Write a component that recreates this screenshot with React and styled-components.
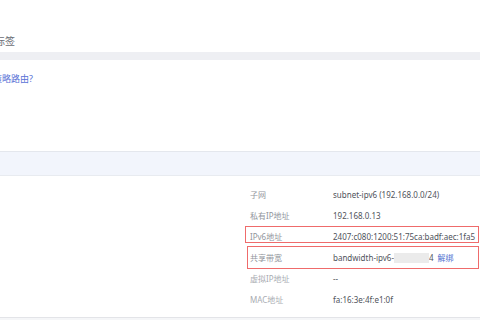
import React from "react";
import styled, { createGlobalStyle } from "styled-components";

const GlobalStyle = createGlobalStyle`
  html, body {
    margin: 0;
    padding: 0;
    background: #ffffff;
  }
  body {
    font-family: "Noto Sans", "Noto Sans CJK SC", sans-serif;
  }
`;

const Page = styled.div`
  width: 480px;
  height: 320px;
  overflow: hidden;
  display: flex;
  flex-direction: column;
  background: #fff;
`;

const SectionTitle = styled.div`
  margin-top: 35px;
  margin-left: -5px;
  height: 12px;
  line-height: 12px;
  font-size: 10px;
  color: #6b6e75;
  white-space: nowrap;
`;

const GrayBand = styled.div`
  margin-top: 5px;
  height: 8px;
  background: #eeeff3;
`;

const HelpLink = styled.a`
  display: block;
  margin-top: 13px;
  margin-left: -7px;
  height: 11px;
  line-height: 11px;
  font-size: 9px;
  color: #5872d6;
  text-decoration: none;
  white-space: nowrap;
`;

const HeaderBand = styled.div`
  margin-top: 67px;
  height: 25px;
  box-sizing: border-box;
  background: #f2f5fc;
  border-top: 1px solid #e4e7ed;
  border-bottom: 1px solid #e8ebf0;
`;

const Details = styled.div`
  position: relative;
  padding: 8px 0 0 250px;
  display: flex;
  flex-direction: column;
`;

const Row = styled.div`
  display: grid;
  grid-template-columns: 83px 1fr;
  height: 21px;
  align-items: center;
  font-size: 8px;
  white-space: nowrap;
`;

const Label = styled.span`
  color: ${(p) => (p.$muted ? "#a9acb2" : "#92959c")};
`;

const Value = styled.span`
  color: #4f535b;
  display: flex;
  align-items: center;
`;

const Masked = styled.span`
  display: inline-block;
  width: 35px;
  height: 10px;
  background: #ebebeb;
  filter: blur(0.6px);
`;

const Action = styled.a`
  margin-left: 4px;
  color: #4f6fd0;
  text-decoration: none;
`;

const Mark = styled.div`
  position: absolute;
  left: ${(p) => p.$left}px;
  top: ${(p) => p.$top}px;
  width: ${(p) => p.$width}px;
  height: ${(p) => p.$height}px;
  box-sizing: border-box;
  border: 1.5px solid #ef6b6b;
  pointer-events: none;
`;

const Footer = styled.div`
  margin-top: 7px;
  flex: 1;
  border-top: 1px solid #e3e4e8;
  background: #f5f6f8;
`;

const rows = [
  { label: "子网", value: "subnet-ipv6 (192.168.0.0/24)" },
  { label: "私有IP地址", value: "192.168.0.13" },
  { label: "IPv6地址", value: "2407:c080:1200:51:75ca:badf:aec:1fa5" },
  { label: "共享带宽", bandwidth: true },
  { label: "虚拟IP地址", value: "--", muted: true },
  { label: "MAC地址", value: "fa:16:3e:4f:e1:0f", muted: true },
];

export default function App() {
  return (
    <>
      <GlobalStyle />
      <Page>
        <SectionTitle>标签</SectionTitle>
        <GrayBand />
        <HelpLink href="#">策略路由?</HelpLink>
        <HeaderBand />
        <Details>
          {rows.map((r) => (
            <Row key={r.label}>
              <Label $muted={r.muted}>{r.label}</Label>
              {r.bandwidth ? (
                <Value>
                  bandwidth-ipv6-
                  <Masked />
                  4<Action href="#">解绑</Action>
                </Value>
              ) : (
                <Value>{r.value}</Value>
              )}
            </Row>
          ))}
          <Mark $left={245} $top={50} $width={234} $height={17} />
          <Mark $left={247} $top={70} $width={232} $height={23} />
        </Details>
        <Footer />
      </Page>
    </>
  );
}
